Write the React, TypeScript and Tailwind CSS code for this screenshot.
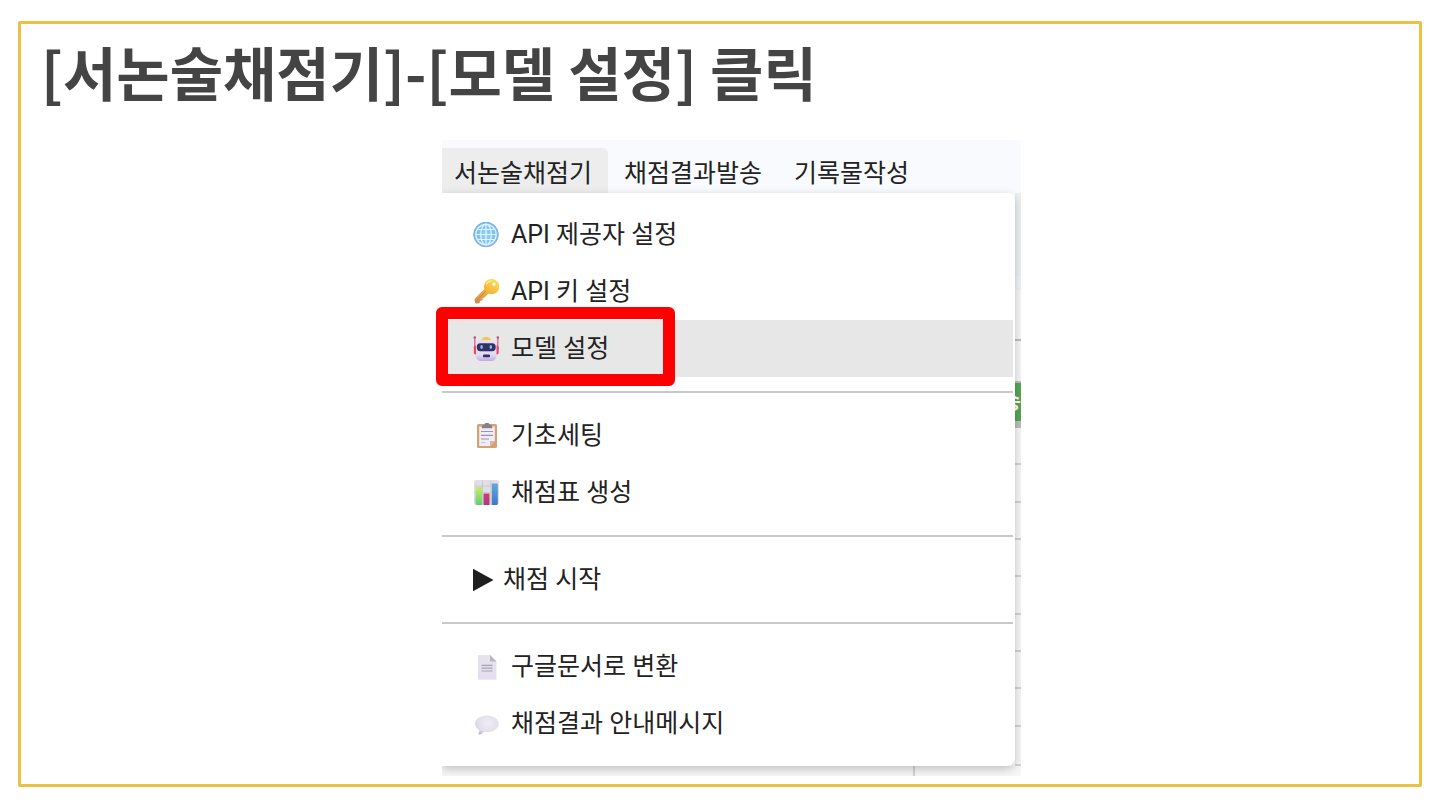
import type { ReactNode } from 'react'

type MenuEntry = {
  label: string
  icon: ReactNode
  active?: boolean
}

function GlobeIcon() {
  return (
    <svg viewBox="0 0 26 26" className="size-[26px] shrink-0" fill="none" aria-hidden="true">
      <defs>
        <linearGradient id="globe" x1="0" y1="0" x2="0" y2="1">
          <stop offset="0" stopColor="#6fb2e4" />
          <stop offset="1" stopColor="#8faaea" />
        </linearGradient>
        <radialGradient id="sea">
          <stop offset="0" stopColor="#93d4f8" />
          <stop offset="1" stopColor="#74b9ee" />
        </radialGradient>
      </defs>
      <circle cx="13" cy="12.500" r="12.300" fill="url(#sea)" stroke="url(#globe)" strokeWidth="1" />
      <g stroke="#e4f4ff" strokeWidth="1.200">
        <ellipse cx="13" cy="12.500" rx="5.300" ry="10.300" />
        <circle cx="13" cy="12.500" r="10.200" />
        <path d="M13 2.200v20.600M2.800 12.500h20.400M4.600 7.500h16.800M4.600 17.500h16.800" />
      </g>
    </svg>
  )
}

function KeyIcon() {
  return (
    <svg viewBox="0 0 26 26" className="size-[26px] shrink-0" fill="none" aria-hidden="true">
      <defs>
        <linearGradient id="key" x1="22" y1="2" x2="4" y2="25" gradientUnits="userSpaceOnUse">
          <stop offset="0" stopColor="#ffd94a" />
          <stop offset="0.5" stopColor="#efae3c" />
          <stop offset="1" stopColor="#d08a58" />
        </linearGradient>
      </defs>
      <path
        fillRule="evenodd"
        d="M18.500 0a7.600 7.600 0 0 0-7.200 9.900L2.100 19.400c-.5.500-.6 1-.5 1.700l.4 2.200c.2.900.7 1.300 1.600 1.200l2.200-.2c.7-.1 1-.5 1.100-1.100l.2-1.300 1.600-.3c.7-.1 1-.5 1-1.200v-1.300l1.400-.3 4.500-4.300A7.600 7.600 0 1 0 18.500 0Zm2.400 3.600a1.700 1.700 0 1 1 0 3.400 1.700 1.700 0 0 1 0-3.400Z"
        fill="url(#key)"
      />
      <path d="m4 21.200 8.400-8.600" stroke="#d0884a" strokeWidth="1" strokeLinecap="round" />
      <path d="M13.500 5c1-2 2.800-3 5-3" stroke="#ffe98a" strokeWidth="1.400" strokeLinecap="round" />
    </svg>
  )
}

function RobotIcon() {
  return (
    <svg viewBox="0 0 26 26" className="size-[26px] shrink-0" fill="none" aria-hidden="true">
      <defs>
        <linearGradient id="head" x1="0" y1="0" x2="0" y2="1">
          <stop offset="0" stopColor="#e6dcee" />
          <stop offset="0.7" stopColor="#e2dbf2" />
          <stop offset="1" stopColor="#c2a9e3" />
        </linearGradient>
      </defs>
      <path d="M1.800 1v12M24.800 1v12" stroke="#e5627f" strokeWidth="1.300" />
      <circle cx="1.800" cy="1.400" r="1.200" fill="#a8557e" />
      <circle cx="24.800" cy="1.400" r="1.200" fill="#a8557e" />
      <rect x="0.800" y="9.500" width="4" height="9" rx="1.800" fill="#e2496b" />
      <rect x="21.700" y="9.500" width="4" height="9" rx="1.800" fill="#e2496b" />
      <path d="M8.800 4.500c.4-2.600 1.500-3.500 4.500-3.500s4.100.9 4.500 3.500Z" fill="#f3c650" />
      <path d="M3 9.500C3 6 5 4 8.500 4H18c3.500 0 5.500 2 5.500 5.500V19c0 4-2 6-6 6H9c-4 0-6-2-6-6Z" fill="url(#head)" />
      <rect x="3.800" y="7.200" width="18.900" height="8" rx="3.600" fill="#303064" />
      <ellipse cx="8.600" cy="11" rx="1.300" ry="2" fill="#87b9f5" />
      <ellipse cx="17.800" cy="11" rx="1.300" ry="2" fill="#87b9f5" />
      <rect x="10" y="18.500" width="7" height="2.800" rx="1" fill="#34315e" />
    </svg>
  )
}

function ClipboardIcon() {
  return (
    <svg viewBox="0 0 26 26" className="size-[26px] shrink-0" fill="none" aria-hidden="true">
      <rect x="4" y="1" width="20" height="24" rx="1.600" fill="#d3a273" />
      <path d="M6.200 3.500h15.600v14.500L17 23H6.200Z" fill="#f0edf8" />
      <path d="M21.800 18H17v5Z" fill="#dcb1b0" />
      <path d="M8.800 4.100c0-1.700 1-2.600 2.800-2.600.2-1.200 1-1.800 2.400-1.800s2.200.6 2.400 1.800c1.800 0 2.800.9 2.800 2.600v1.100H8.800Z" fill="#85828d" />
      <path d="M8 8.500h12M8 12.300h12M8 16h8" stroke="#9995b0" strokeWidth="1.200" />
      <path d="M8 19.700h4.500" stroke="#c4c0d4" strokeWidth="1" />
    </svg>
  )
}

function ChartIcon() {
  return (
    <svg viewBox="0 0 26 26" className="size-[26px] shrink-0" fill="none" aria-hidden="true">
      <defs>
        <linearGradient id="green" x1="0" y1="0" x2="0" y2="1">
          <stop offset="0" stopColor="#c7ee66" />
          <stop offset="1" stopColor="#62cd75" />
        </linearGradient>
        <linearGradient id="red" x1="0" y1="0" x2="0" y2="1">
          <stop offset="0" stopColor="#ce3f6d" />
          <stop offset="1" stopColor="#ae3a79" />
        </linearGradient>
        <linearGradient id="blue" x1="0" y1="0" x2="0" y2="1">
          <stop offset="0" stopColor="#5ea9e0" />
          <stop offset="1" stopColor="#4178c2" />
        </linearGradient>
      </defs>
      <rect x="1" y="0" width="25" height="25" rx="2.500" fill="#e0dee6" />
      <path d="M9.500.5v24M17.800.5v24M1.500 6h24M1.500 12.500h24M1.500 19h24" stroke="#c6c3cf" strokeWidth="0.800" />
      <path d="M2.500 7h6.500v18H4a1.500 1.500 0 0 1-1.500-1.500Z" fill="url(#green)" />
      <path d="M10.500 13.500h6V25h-6Z" fill="url(#red)" />
      <path d="M18.800 3.500h6v20a1.500 1.500 0 0 1-1.500 1.500h-4.500Z" fill="url(#blue)" />
    </svg>
  )
}

function PlayIcon() {
  return (
    <svg viewBox="0 0 22 26" className="h-[26px] w-[22px] shrink-0" aria-hidden="true">
      <path d="M0 1.800 20.500 13 0 24.200Z" fill="#1f1f1f" />
    </svg>
  )
}

function PageIcon() {
  return (
    <svg viewBox="0 0 26 26" className="size-[26px] shrink-0" fill="none" aria-hidden="true">
      <defs>
        <linearGradient id="page" x1="0" y1="0" x2="0" y2="1">
          <stop offset="0" stopColor="#e6e4ed" />
          <stop offset="1" stopColor="#e4dff0" />
        </linearGradient>
      </defs>
      <path d="M5 1h12l6.500 6.500V25a.8.8 0 0 1-.8.8H5.800A.8.8 0 0 1 5 25V1.800Z" fill="url(#page)" />
      <path d="M17 1v5.700c0 .5.300.8.800.8h5.700Z" fill="#b9b4c7" />
      <path d="M8.500 11.300h11M8.500 14.200h11M8.500 17h11" stroke="#a5a2b4" strokeWidth="1.200" />
    </svg>
  )
}

function SpeechIcon() {
  return (
    <svg viewBox="0 0 26 26" className="size-[26px] shrink-0" fill="none" aria-hidden="true">
      <defs>
        <radialGradient id="speech" cx="0.55" cy="0.4" r="0.65">
          <stop offset="0" stopColor="#efedf6" />
          <stop offset="0.7" stopColor="#e2dfeb" />
          <stop offset="1" stopColor="#c1b5d2" />
        </radialGradient>
      </defs>
      <path
        d="M14 4.500C7.500 4.500 2.300 8.100 2.300 12.700c0 2.500 1.500 4.700 4 6.200.2 1.500-.2 2.700-1 3.800-.3.500 0 .9.600.8 2.100-.3 3.800-1.200 5-2.800 1 .2 2 .3 3.100.3 6.500 0 11.700-3.700 11.700-8.300S20.500 4.500 14 4.500Z"
        fill="url(#speech)"
      />
    </svg>
  )
}

const TABS = ['서논술채점기', '채점결과발송', '기록물작성']

const MENU_GROUPS: MenuEntry[][] = [
  [
    { label: 'API 제공자 설정', icon: <GlobeIcon /> },
    { label: 'API 키 설정', icon: <KeyIcon /> },
    { label: '모델 설정', icon: <RobotIcon />, active: true },
  ],
  [
    { label: '기초세팅', icon: <ClipboardIcon /> },
    { label: '채점표 생성', icon: <ChartIcon /> },
  ],
  [{ label: '채점 시작', icon: <PlayIcon /> }],
  [
    { label: '구글문서로 변환', icon: <PageIcon /> },
    { label: '채점결과 안내메시지', icon: <SpeechIcon /> },
  ],
]

function MenuBar() {
  return (
    <nav className="flex items-end bg-[#f8fafd] pt-2">
      {TABS.map((tab, i) => (
        <button
          key={tab}
          type="button"
          className={`pt-2 pr-4 pb-px whitespace-nowrap ${
            i === 0 ? 'rounded-tr-md bg-[#ededee] pl-3' : 'pl-4'
          }`}
        >
          {tab}
        </button>
      ))}
    </nav>
  )
}

function DropdownMenu() {
  return (
    <div className="relative z-10 min-w-0 flex-1 rounded-r-lg bg-white pt-[13px] pr-0.5 pb-3.5 shadow-[0_3px_10px_rgba(0,0,0,0.22)]">
      {MENU_GROUPS.map((group, i) => (
        <div key={i}>
          {i > 0 && <hr className="my-3.5 h-0.5 border-0 bg-[#c8c8c8]" />}
          {group.map((entry) => (
            <button
              key={entry.label}
              type="button"
              className={`flex h-[57px] w-full items-center pl-[31px] text-left ${
                entry.active ? 'bg-[#e7e7e7]' : ''
              } ${entry.label === '채점 시작' ? 'gap-2' : 'gap-3'}`}
            >
              {entry.icon}
              <span>{entry.label}</span>
            </button>
          ))}
        </div>
      ))}
    </div>
  )
}

// Slice of the spreadsheet that stays visible beside the open menu
function SheetEdge() {
  return (
    <div className="flex w-1.5 shrink-0 flex-col bg-[#f6f6f6]">
      <div className="h-[83px] bg-[#ebeff1]" />
      <div className="h-3.5 bg-[#eff2f8]" />
      <div className="h-[51px] border-b-2 border-[#bdbdbd]" />
      <div className="h-10" />
      <div className="flex h-[47px] items-center justify-end overflow-hidden border-t-2 border-b-[7px] border-[#bdbdbd] bg-[#57a557] text-xl font-bold text-white">
        <span>송</span>
      </div>
      <div className="grid flex-1 auto-rows-fr divide-y-2 divide-[#d2d2d2] border-b-2 border-[#d2d2d2]">
        {Array.from({ length: 9 }, (_, i) => (
          <div key={i} />
        ))}
      </div>
    </div>
  )
}

export default function App() {
  return (
    <div className="flex min-h-screen bg-white px-[18px] pt-[21px] pb-[23px] font-['Noto_Sans_CJK_KR',sans-serif]">
      <main className="flex-1 rounded-[2px] border-[3px] border-[#ecc244]">
        <h1 className="px-5 pt-2 text-[58px] leading-[78px] font-bold text-[#444444]">
          [서논술채점기]-[모델 설정] 클릭
        </h1>
        <section className="mt-[30px] flex justify-center pl-[23px]">
          <div className="relative w-full max-w-[579px] text-[25px] leading-9 text-[#222222] font-[Roboto,'Noto_Sans_CJK_KR',sans-serif]">
            <div className="overflow-hidden">
              <MenuBar />
              <div className="flex">
                <DropdownMenu />
                <SheetEdge />
              </div>
              <div className="h-2.5 bg-[#f6f6f6] pl-[471px]">
                <div className="h-full border-l-2 border-[#d2d2d2]" />
              </div>
            </div>
            {/* Highlight frame around the active entry */}
            <div className="pointer-events-none absolute top-[167px] -left-1.5 z-20 h-[79px] w-[239px] rounded-md border-[12px] border-[#ff0000]" />
          </div>
        </section>
      </main>
    </div>
  )
}
